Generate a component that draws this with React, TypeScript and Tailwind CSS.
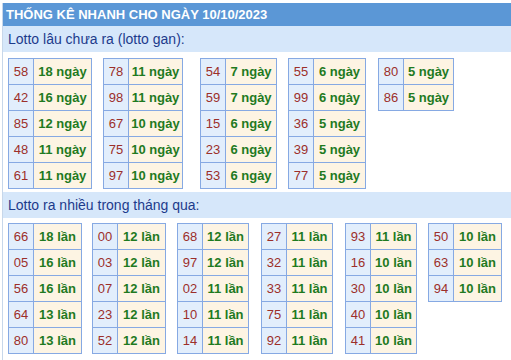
import React from "react";

type Tbl = { cls: string; rows: [string, string][] };

const gan: Tbl[] = [
  { cls: "w-[84px]", rows: [["58", "18 ngày"], ["42", "16 ngày"], ["85", "12 ngày"], ["48", "11 ngày"], ["61", "11 ngày"]] },
  { cls: "w-[80px] ml-[11px]", rows: [["78", "11 ngày"], ["98", "11 ngày"], ["67", "10 ngày"], ["75", "10 ngày"], ["97", "10 ngày"]] },
  { cls: "w-[77px] ml-[17px]", rows: [["54", "7 ngày"], ["59", "7 ngày"], ["15", "6 ngày"], ["23", "6 ngày"], ["53", "6 ngày"]] },
  { cls: "w-[78px] ml-[11px]", rows: [["55", "6 ngày"], ["99", "6 ngày"], ["36", "5 ngày"], ["39", "5 ngày"], ["77", "5 ngày"]] },
  { cls: "w-[76px] ml-[12px]", rows: [["80", "5 ngày"], ["86", "5 ngày"]] },
];

const nhieu: Tbl[] = [
  { cls: "w-[74px]", rows: [["66", "18 lần"], ["05", "16 lần"], ["56", "16 lần"], ["64", "13 lần"], ["80", "13 lần"]] },
  { cls: "w-[74px] ml-[10px]", rows: [["00", "12 lần"], ["03", "12 lần"], ["07", "12 lần"], ["23", "12 lần"], ["52", "12 lần"]] },
  { cls: "w-[72px] ml-[11px]", rows: [["68", "12 lần"], ["97", "12 lần"], ["02", "11 lần"], ["10", "11 lần"], ["14", "11 lần"]] },
  { cls: "w-[72px] ml-[12px]", rows: [["27", "11 lần"], ["32", "11 lần"], ["33", "11 lần"], ["75", "11 lần"], ["92", "11 lần"]] },
  { cls: "w-[72px] ml-[12px]", rows: [["93", "11 lần"], ["16", "10 lần"], ["30", "10 lần"], ["40", "10 lần"], ["41", "10 lần"]] },
  { cls: "w-[74px] ml-[11px]", rows: [["50", "10 lần"], ["63", "10 lần"], ["94", "10 lần"]] },
];

function Table({ t }: { t: Tbl }) {
  return (
    <div className={"shrink-0 border border-[#86a9e3] " + t.cls}>
      {t.rows.map(([n, v], i) => (
        <div key={i} className={i > 0 ? "flex h-[26px] border-t border-[#86a9e3]" : "flex h-[25px]"}>
          <div className="w-[25px] shrink-0 bg-[#e2eefc] border-r border-[#86a9e3] text-[#9c2f2a] text-[13px] leading-[25px] text-center">
            {n}
          </div>
          <div className="flex-1 bg-[#fdf4e3] text-[#1f7a1f] font-bold text-[13px] leading-[25px] text-center">
            {v}
          </div>
        </div>
      ))}
    </div>
  );
}

export default function App() {
  return (
    <div className="w-[511px] h-[360px] bg-white pt-[3px] pl-[2px] overflow-hidden font-['Liberation_Sans',Arial,sans-serif]">
      <div className="h-full border-l border-[#c7d7ea]">
        <div className="h-[23px] bg-[#5b97d6] text-white font-bold text-[13px] leading-[23px] pl-[3px]">
          THỐNG KÊ NHANH CHO NGÀY 10/10/2023
        </div>
        <div className="h-[26px] bg-[#d6e7fa] text-[#1d3b8c] text-[14px] leading-[26px] pl-[5px]">
          Lotto lâu chưa ra (lotto gan):
        </div>
        <div className="flex items-start pl-[5px] pt-[6px] pb-[3px]">
          {gan.map((t, i) => (
            <Table key={i} t={t} />
          ))}
        </div>
        <div className="h-[26px] bg-[#d6e7fa] text-[#1d3b8c] text-[14px] leading-[26px] pl-[5px]">
          Lotto ra nhiều trong tháng qua:
        </div>
        <div className="flex items-start pl-[5px] pt-[5px]">
          {nhieu.map((t, i) => (
            <Table key={i} t={t} />
          ))}
        </div>
      </div>
    </div>
  );
}
